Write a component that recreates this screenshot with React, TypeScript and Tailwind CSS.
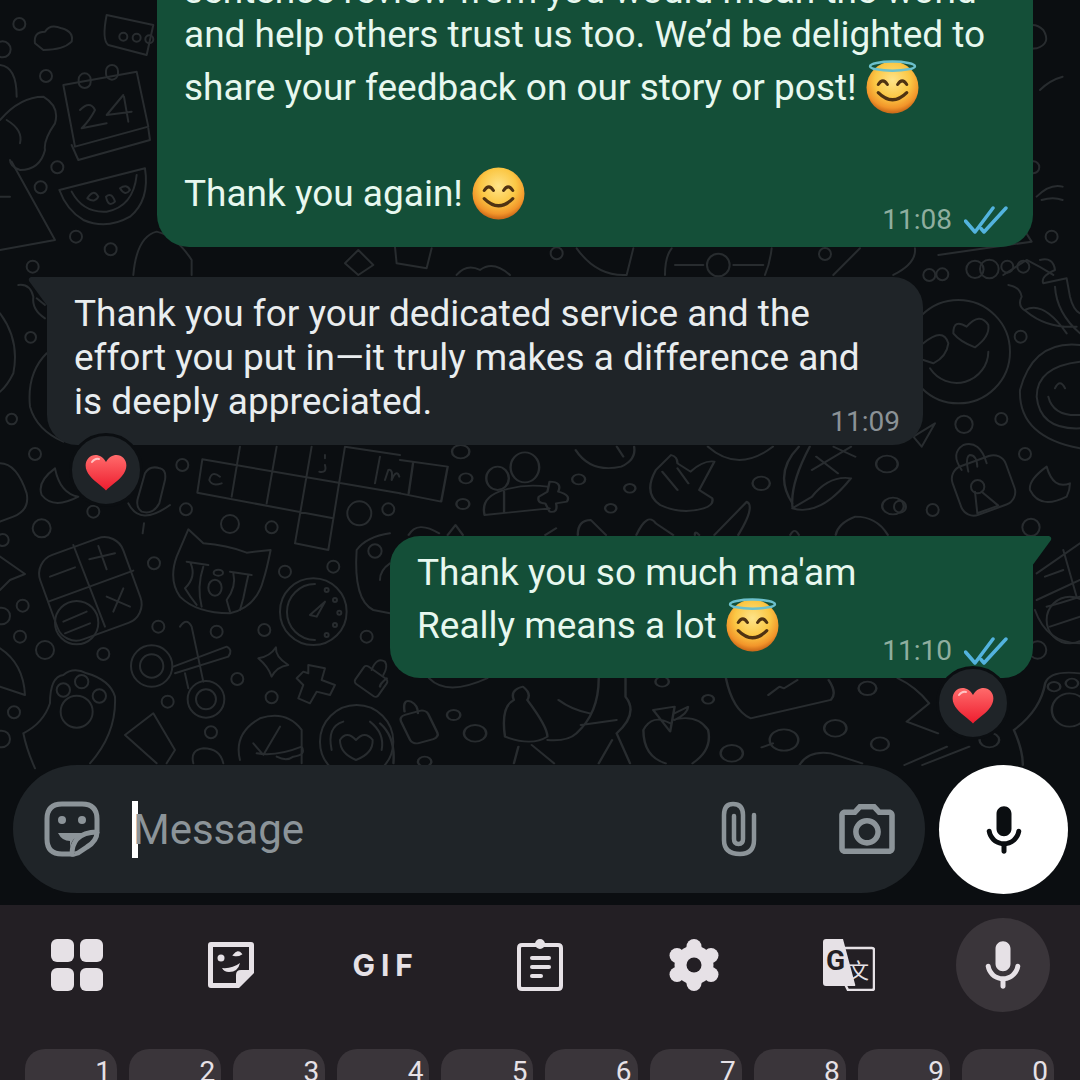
import React, { useId } from "react";

const font = { fontFamily: "Roboto, 'Noto Sans', sans-serif" };

type Ring = [number, number, number];

const Rings = ({ items }: { items: Ring[] }) => (
    <>
        {items.map(([x, y, r], i) => (
            <circle key={i} cx={x} cy={y} r={r} />
        ))}
    </>
);

// wallpaper doodles, traced in the coords of the zoomed crops
const Wallpaper = () => (
    <svg className="absolute inset-0" width="1080" height="1080" fill="none" stroke="#282c2f" strokeLinecap="round" strokeLinejoin="round">
        <g transform="scale(0.3333)" strokeWidth="6">
            <Rings items={[[58, 72, 18], [138, 228, 18], [172, 502, 18], [122, 562, 18], [228, 710, 18], [332, 748, 18], [98, 800, 18], [8, 148, 24], [370, 110, 12], [410, 113, 12], [448, 118, 12]]} />
            <path d="M105 130Q100 95 135 95Q150 70 185 85Q222 95 215 125Q190 150 130 150Z" />
            <path d="M320 45L460 75L440 165L325 135Q305 120 320 45Z" />
            <path d="M190 255L410 215L445 380L225 440Z" />
            <path d="M215 435L235 480L450 420L445 385" />
            <rect x="236" y="220" width="36" height="44" rx="18" />
            <rect x="318" y="195" width="36" height="44" rx="18" />
            <path d="M240 330Q270 300 285 330Q270 360 245 385L320 370M370 285L320 345L395 335M372 290L385 365" />
            <path d="M178 570L435 505Q450 600 390 650Q320 690 250 660Q200 630 178 570Z" />
            <path d="M215 575Q250 640 320 635Q400 620 410 525" />
            <path d="M262 595Q280 565 295 590Q285 610 262 595M318 590Q335 575 345 605Q325 625 318 590M360 565Q380 550 390 570Q375 590 360 565" />
            <path d="M0 195Q50 200 50 290M0 360Q60 290 130 290Q180 320 165 370Q130 420 135 450Q120 510 60 510Q30 500 30 480" />
            <path d="M35 485L165 720L0 750M0 590L30 590" />
            <path d="M20 360Q70 390 60 430" />
            <path d="M400 825Q410 710 470 695Q530 710 575 780L575 825" />
            <path d="M1035 790L1075 750L1120 795L1075 825Z" />
            <path d="M1185 740L1190 790L1280 805L1295 745" />
            <path d="M1370 825Q1400 790 1440 810Q1480 780 1530 825" />
        </g>
        <g transform="translate(540 0) scale(0.3333)" strokeWidth="6">
            <Rings items={[[50, 760, 18], [855, 762, 18], [535, 795, 34], [1168, 825, 18], [1305, 808, 26], [1402, 800, 18], [1480, 502, 18], [1535, 710, 18], [1445, 228, 14]]} />
            <path d="M110 745Q170 830 260 825L280 745M375 825Q375 770 395 745M695 745Q690 790 675 825M405 795L490 795M580 795L670 795" />
            <path d="M880 825L960 745M1125 745Q1130 790 1060 825" />
            <path d="M1440 670L1475 725L1195 765" />
            <path d="M1440 90Q1480 60 1510 90Q1535 130 1490 145L1440 150M1500 270Q1530 240 1568 230M1440 320Q1490 360 1470 400L1440 420" />
            <path d="M1490 590Q1530 550 1568 560M1505 600Q1540 590 1568 600M1390 825L1460 780Q1500 800 1540 825" />
        </g>
        <g transform="translate(0 260) scale(0.3333)" strokeWidth="6">
            <Rings items={[[92, 232, 16], [35, 477, 16]]} />
            <path d="M0 160Q60 240 40 340Q20 380 0 395M140 280Q80 340 90 440Q110 510 190 545" />
            <path d="M55 75Q90 70 100 110Q95 150 135 175M110 115L135 135" />
        </g>
        <g transform="translate(0 440) scale(0.3333)" strokeWidth="6">
            <Rings items={[[105, 42, 18], [547, 75, 18], [280, 215, 18], [558, 208, 18], [125, 265, 27], [690, 252, 27], [815, 262, 18], [1078, 220, 36], [1165, 208, 18], [462, 370, 18], [855, 395, 18], [1000, 380, 18], [68, 497, 18], [60, 590, 18], [475, 560, 18], [650, 575, 18], [793, 570, 18], [1100, 590, 18], [135, 630, 27], [310, 642, 18], [712, 717, 18], [503, 785, 18], [815, 772, 18], [42, 817, 18], [633, 877, 18], [8, 300, 18], [5, 528, 25], [5, 897, 25], [1125, 333, 20]]} />
            <path d="M607 58L1200 160M592 158L1000 235M1035 20L1200 45M720 20L695 170M830 20L800 190M935 20L885 310L985 330L1035 20M1140 50L1125 130M607 58L592 158" />
            <path d="M660 110Q635 90 628 120Q635 140 665 130M975 45L975 55M975 75Q982 100 958 95M1155 120L1165 90Q1180 85 1175 120Q1190 85 1198 110" />
            <path d="M565 268L610 310Q680 315 740 338L812 330Q800 390 790 420Q770 500 690 520Q590 520 540 470Q505 420 530 350Z" />
            <path d="M560 365L625 375M572 370Q590 410 555 445Q570 470 590 495M610 380Q590 440 605 500M690 395L755 405M700 400Q710 440 680 480L690 515M745 405Q735 450 730 475L720 510" />
            <ellipse cx="645" cy="443" rx="20" ry="24" />
            <ellipse cx="655" cy="398" rx="14" ry="9" />
            <rect x="138" y="312" width="265" height="270" rx="60" transform="rotate(-20 270 445)" />
            <path d="M220 315L315 560M145 485L400 392M150 410L225 382M268 358L345 340M295 318L320 388M320 470L390 500M370 445L340 515M190 545L260 515M195 580L270 550" />
            <circle cx="230" cy="548" r="65" />
            <circle cx="940" cy="515" r="100" />
            <path d="M945 432A83 83 0 0 0 945 600M930 525L975 485L950 530Z" />
            <Rings items={[[980, 450, 6], [1005, 480, 6], [1018, 518, 6], [1005, 555, 6], [980, 585, 6]]} />
            <circle cx="455" cy="678" r="62" />
            <circle cx="455" cy="678" r="35" />
            <path d="M520 680L680 620Q700 630 685 650L525 700M540 560Q560 530 575 560L610 725" />
            <path d="M555 700L565 745" />
            <circle cx="618" cy="778" r="55" />
            <circle cx="618" cy="778" r="30" />
            <path d="M828 622Q825 650 865 675Q830 680 815 710Q805 680 775 655Q810 650 828 622Z" />
            <path d="M925 675L975 685L965 720L1005 735L990 765L950 755L930 790L895 775L910 735L890 715L910 695L925 700Z" />
            <rect x="1072" y="690" width="84" height="64" rx="10" transform="rotate(35 1110 722)" />
            <path d="M1115 690Q1130 650 1155 665Q1165 680 1150 705" />
            <circle cx="230" cy="815" r="48" />
            <Rings items={[[190, 750, 20], [245, 725, 20], [298, 768, 20]]} />
            <path d="M70 880Q130 850 150 790Q150 710 190 705Q220 680 260 700Q330 720 345 770Q350 880 270 970M70 880Q80 930 105 985" />
            <path d="M375 885L460 820L525 930L500 970M375 885L470 970" />
            <path d="M720 960Q700 880 780 835Q860 810 905 870L905 970M760 910L790 945L840 860M770 940Q830 950 905 920Q920 945 880 950Q860 965 830 950" />
            <path d="M580 970Q570 930 610 925Q660 925 670 970" />
            <circle cx="1070" cy="905" r="110" />
            <path d="M995 930Q980 860 1030 845M1110 845Q1155 880 1145 930" />
            <path d="M1068 900Q1040 870 1020 900Q1020 940 1068 960Q1120 940 1118 900Q1095 870 1068 900Z" />
            <path d="M435 100Q450 75 480 85Q500 90 495 120L478 190Q460 225 425 215Q405 200 415 170ZM385 190Q420 260 510 195M432 250L428 280" />
            <path d="M165 85Q110 125 125 165Q160 210 235 170Q180 160 165 85Z" />
            <path d="M0 70Q50 70 80 160Q90 210 40 230L0 245M0 350L75 402L30 420L0 450M0 625Q70 670 75 765L0 740" />
            <path d="M1170 280Q1100 290 1070 330Q1060 480 1120 510L1170 520M1170 370Q1140 390 1140 420" />
        </g>
        {/* these two crops came back wider than tall, hence the two scales */}
        <g transform="translate(400 440) scale(0.4336 0.3333)" strokeWidth="5.500">
            <Rings items={[[152, 115, 15], [145, 192, 15], [412, 118, 15], [530, 145, 13], [486, 205, 13], [833, 130, 20], [1123, 72, 25], [1137, 198, 25], [140, 35, 20]]} />
            <ellipse cx="288" cy="82" rx="33" ry="45" />
            <ellipse cx="225" cy="115" rx="26" ry="35" />
            <path d="M195 225Q185 170 240 150Q290 130 340 140M240 155L240 218M195 225L345 205M345 125Q375 125 365 155Q395 165 385 185L360 190Q365 220 345 215L335 190Q315 190 320 170L340 155Z" />
            <path d="M405 30Q440 100 510 80Q545 60 540 20M500 20L515 50" />
            <path d="M590 90L625 45Q640 50 640 70L670 95Q700 60 725 65L690 150L720 175Q725 195 700 205Q650 225 600 195Q560 160 590 90ZM605 95L640 150M640 85L665 130" />
            <path d="M710 20Q780 100 860 20M905 190Q860 100 920 20M905 200Q900 130 945 20M905 205Q970 230 1040 115Q990 105 950 170L905 205M950 90L1040 20M960 50L1010 100M1000 20L1050 50" />
            <path d="M0 60L110 80L95 185L0 160M30 70L20 160M20 285Q40 240 90 280M110 285L128 255L145 285M335 285L360 265M410 285Q410 240 440 240L475 285M545 285Q570 215 590 250L630 285M725 285L800 185Q820 200 780 285M680 285Q680 270 690 285M900 285Q910 260 920 285M1005 285Q1010 250 1050 230Q1100 230 1125 285" />
        </g>
        <g transform="translate(380 670) scale(0.4464 0.3333)" strokeWidth="5.500">
            <Rings items={[[165, 135, 15], [213, 190, 25], [735, 88, 13], [788, 250, 25], [1020, 175, 25], [1120, 222, 20], [1092, 55, 20], [905, 210, 32], [632, 35, 15], [100, 275, 15], [1365, 210, 22], [1510, 50, 14], [1550, 40, 14]]} />
            <rect x="55" y="125" width="65" height="90" rx="15" transform="rotate(-20 90 170)" />
            <path d="M55 125Q50 85 70 95Q85 105 85 130M15 25Q0 40 0 50M0 160Q35 200 30 280" />
            <path d="M110 25Q150 80 240 25M280 200Q270 110 300 90Q290 60 320 50Q340 70 330 90Q375 170 375 200Q340 230 280 200ZM310 230L300 280M340 225L390 280M400 90Q430 120 470 130M490 25Q490 130 440 190Q420 215 375 210M550 25V80Q580 130 530 190L560 280M450 165L530 150M520 210L490 280" />
            <path d="M650 160Q610 130 590 180Q590 260 640 280M655 150Q710 130 735 180Q745 240 700 280M612 120L660 110L650 185ZM660 130L690 110Q690 130 660 150" />
            <path d="M775 25Q790 120 830 145L1010 90Q1025 70 1005 30M870 75L895 50L905 55L935 30" />
            <path d="M855 232L880 220M1180 155L1250 190M1180 155L1230 100Q1200 50 1160 25" />
            <path d="M940 285Q960 240 1010 250L1080 280M1175 285L1270 230M1215 285L1320 230" />
            <path d="M1420 180Q1480 120 1490 40Q1500 0 1568 10M1420 180Q1440 240 1440 285" />
            <ellipse cx="1545" cy="120" rx="40" ry="50" />
        </g>
        <g transform="translate(900 240) scale(0.3333)" strokeWidth="6">
            <Rings items={[[127, 103, 18], [268, 87, 28], [370, 80, 18], [362, 290, 18], [192, 553, 26], [304, 537, 18], [375, 642, 18], [98, 810, 18], [393, 862, 26], [0, 800, 18]]} />
            <circle cx="175" cy="335" r="155" />
            <path d="M90 385A95 95 0 0 0 265 335" />
            <path d="M160 280Q160 235 200 260Q240 215 265 255Q270 290 225 322Q180 305 160 280Z" />
            <path d="M70 310Q130 260 145 310Q140 350 100 370L70 360" />
            <path d="M325 135Q360 140 365 170Q350 200 380 215Q440 265 530 260M375 210Q430 180 500 280M420 60Q460 50 465 90Q420 110 430 130L500 115L510 170Q520 210 540 220M465 140Q470 220 540 280" />
            <path d="M540 315Q400 300 360 450Q355 590 540 625M540 365Q410 380 410 470Q420 570 540 565M445 470Q460 530 540 525M465 445Q480 415 495 445" />
            <rect x="165" y="660" width="170" height="155" rx="40" transform="rotate(-20 247 735)" />
            <path d="M185 690Q150 640 190 615Q240 600 260 670M205 695Q195 650 210 645Q230 645 232 680" />
            <circle cx="233" cy="740" r="20" />
            <path d="M225 755L232 820L295 797L245 755" />
            <path d="M440 680Q385 720 390 750Q420 810 500 770Q510 750 510 730Q460 750 440 680Z" />
            <path d="M40 590L105 550L65 620Z" />
        </g>
        <g transform="translate(700 530) scale(0.3333)" strokeWidth="6">
            <path d="M1010 130L1140 40M1010 210L1140 150M1005 240Q1040 340 1140 340M1090 60L1130 200M1035 140L1090 120M1040 230Q1080 220 1140 200M1050 290L1140 260" />
            <circle cx="1110" cy="270" r="70" />
            <circle cx="1013" cy="360" r="26" />
        </g>
    </svg>
);

const HaloIcon = () => (
    <g fill="none" stroke="#6cc0cc" strokeWidth="2.500">
        <ellipse cx="26" cy="7" rx="22" ry="4.500" />
    </g>
);

const Emoji = ({ halo }: { halo?: boolean }) => {
    const id = useId();
    return (
        <svg viewBox="0 0 52 54" className="inline-block w-[53px] h-[55px] align-[-14px] -mt-3">
            <defs>
                <radialGradient id={id} cx="50%" cy="36%" r="62%">
                    <stop offset="0%" stopColor="#fee48a" />
                    <stop offset="55%" stopColor="#fbc744" />
                    <stop offset="86%" stopColor="#f2952a" />
                    <stop offset="100%" stopColor="#cf6d1a" />
                </radialGradient>
            </defs>
            <circle cx="26" cy="28" r="25.500" fill={`url(#${id})`} />
            {halo && <HaloIcon />}
            <path d="M12 25Q16.500 18 21 25M31 25Q35.500 18 40 25" fill="none" stroke="#4f3212" strokeWidth="3" strokeLinecap="round" />
            <path d="M12 33Q26 47 40 33" fill="none" stroke="#4f3212" strokeWidth="3.200" strokeLinecap="round" />
        </svg>
    );
};

const Heart = () => {
    const id = useId();
    return (
        <svg viewBox="0 0 42 38" className="w-[42px] h-[38px]">
            <defs>
                <linearGradient id={id} x1="0" y1="0" x2="0" y2="1">
                    <stop offset="0%" stopColor="#ff6b6b" />
                    <stop offset="100%" stopColor="#ee1c2e" />
                </linearGradient>
            </defs>
            <path d="M21 9C17 1 8 0 3.500 5C-1 10 0 17 5 23C10 29 17 33 21 37.500C25 33 32 29 37 23C42 17 43 10 38.500 5C34 0 25 1 21 9Z" fill={`url(#${id})`} />
            <path d="M7 9Q10 5 14 6" fill="none" stroke="#ffc4c4" strokeWidth="2" strokeLinecap="round" />
        </svg>
    );
};

const Reaction = ({ className }: { className: string }) => (
    <div className={`absolute w-[74px] h-[74px] rounded-full bg-[#1f2428] border-[3px] border-[#0b0e11] flex items-center justify-center pt-1 ${className}`}>
        <Heart />
    </div>
);

const Ticks = () => (
    <svg viewBox="0 0 44 28" className="w-[44px] h-[28px]" fill="none" stroke="#53b3de" strokeWidth="3.500" strokeLinecap="round" strokeLinejoin="round">
        <path d="M1.500 15L11 26L29 2" />
        <path d="M20 26L42 2M17 22.500L20 26" />
    </svg>
);

const Time = ({ value, sent }: { value: string; sent?: boolean }) => (
    <div className={`absolute flex items-center gap-[12px] text-[28px] leading-none ${sent ? "right-[25px] bottom-[13px] text-[#8fae9f]" : "right-[23px] bottom-[9px] text-[#8b9296]"}`}>
        <span>{value}</span>
        {sent && <Ticks />}
    </div>
);

const StickerFace = () => (
    <svg viewBox="0 0 56 56" className="w-[56px] h-[56px]" fill="none" stroke="#8c9499" strokeWidth="5" strokeLinejoin="round">
        <path d="M18 3H38Q53 3 53 18V31Q40 31 33 38Q28 44 28 53H18Q3 53 3 38V18Q3 3 18 3Z" />
        <path d="M53 31Q53 40 43 46L34 52Q28 54 28 53" />
        <circle cx="18" cy="19" r="4" fill="#8c9499" stroke="none" />
        <circle cx="38" cy="19" r="4" fill="#8c9499" stroke="none" />
        <path d="M14 32H42Q36 36 30 38Q26 42 26 50V40Q18 40 14 32Z" fill="#8c9499" stroke="none" />
    </svg>
);

const Paperclip = () => (
    <svg viewBox="0 0 38 56" className="w-[38px] h-[56px]" fill="none" stroke="#8c9499" strokeWidth="4.500" strokeLinecap="round">
        <path d="M34 14V39Q34 53 20 53Q4 53 4 39V14Q4 3 13 3Q23 3 23 14V38Q23 43 18.500 43Q14 43 14 38V15" />
    </svg>
);

const Camera = () => (
    <svg viewBox="2 2 20 18" className="w-[56px] h-[50px]" fill="#8c9499">
        <path d="M14.120 4l1.830 2H20v12H4V6h4.050l1.830-2h4.240M15 2H9L7.170 4H4c-1.100 0-2 .9-2 2v12c0 1.100.9 2 2 2h16c1.100 0 2-.9 2-2V6c0-1.100-.9-2-2-2h-3.170L15 2zm-3 7c1.650 0 3 1.350 3 3s-1.350 3-3 3-3-1.350-3-3 1.350-3 3-3zm0-2c-2.760 0-5 2.240-5 5s2.240 5 5 5 5-2.240 5-5-2.240-5-5-5z" />
    </svg>
);

const Mic = ({ className, fill }: { className: string; fill: string }) => (
    <svg viewBox="4 1.500 16 20" className={className} fill={fill}>
        <path d="M12 14c1.660 0 3-1.340 3-3V5c0-1.660-1.340-3-3-3S9 3.340 9 5v6c0 1.660 1.340 3 3 3zm5.910-3c-.49 0-.9.360-.98.850C16.520 14.200 14.470 16 12 16s-4.520-1.800-4.930-4.150c-.08-.49-.49-.85-.98-.85-.61 0-1.090.54-1 1.140.49 3 2.890 5.350 5.910 5.780V20c0 .55.45 1 1 1s1-.45 1-1v-2.080c3.020-.43 5.420-2.780 5.910-5.780.1-.6-.39-1.140-1-1.140z" />
    </svg>
);

const Composer = () => (
    <div className="flex items-start gap-[14px] pl-[13px]">
        <div className="w-[912px] h-[128px] rounded-[64px] bg-[#1f2428] flex items-center pl-[31px] pr-[30px]">
            <StickerFace />
            <div className="ml-[32px] w-[6px] h-[57px] bg-white" />
            <span className="-ml-[5px] text-[42px] text-[#8c9499]">Message</span>
            <div className="ml-auto flex items-center gap-[81px]">
                <Paperclip />
                <Camera />
            </div>
        </div>
        <div className="w-[129px] h-[129px] rounded-full bg-white flex items-center justify-center">
            <Mic className="w-[40px] h-[62px]" fill="#0b0e11" />
        </div>
    </div>
);

const keyFill = "#e6e1e6";

const ToolGrid = () => (
    <div className="grid grid-cols-2 gap-[6px]">
        <div className="w-[23px] h-[23px] rounded-[6px] bg-[#e6e1e6]" />
        <div className="w-[23px] h-[23px] rounded-[6px] bg-[#e6e1e6]" />
        <div className="w-[23px] h-[23px] rounded-[6px] bg-[#e6e1e6]" />
        <div className="w-[23px] h-[23px] rounded-[6px] bg-[#e6e1e6]" />
    </div>
);

const ToolSticker = () => (
    <svg viewBox="0 0 46 46" className="w-[46px] h-[46px]">
        <path d="M3 0H43Q46 0 46 3V31L31 46H3Q0 46 0 43V3Q0 0 3 0ZM5 5V41H28V33Q28 28 33 28H41V5Z" fill={keyFill} fillRule="evenodd" />
        <path d="M33 41L41 33H33Z" fill={keyFill} />
        <circle cx="13" cy="16" r="3.500" fill={keyFill} />
        <path d="M26 13Q30 8 33 12Q30 14 26 13Z" fill={keyFill} stroke={keyFill} strokeWidth="2" />
        <path d="M14 26Q24 27 32 21Q30 30 21 30Q16 30 14 26Z" fill={keyFill} />
    </svg>
);

const ToolClipboard = () => (
    <svg viewBox="0 0 46 52" className="w-[46px] h-[52px]" fill="none" stroke={keyFill} strokeWidth="4">
        <path d="M15 6H31M15 6H5Q2 6 2 9V47Q2 50 5 50H41Q44 50 44 47V9Q44 6 41 6H31" />
        <circle cx="23" cy="5" r="3" />
        <rect x="13" y="17" width="21" height="4" rx="2" fill={keyFill} stroke="none" />
        <rect x="13" y="26" width="21" height="4" rx="2" fill={keyFill} stroke="none" />
        <rect x="13" y="35" width="13" height="4" rx="2" fill={keyFill} stroke="none" />
    </svg>
);

const ToolGear = () => (
    <svg viewBox="-25 -26 50 52" className="w-[50px] h-[52px]">
        <g fill={keyFill}>
            <circle r="19.500" />
            <circle cy="-18.500" r="7.500" />
            <circle cy="18.500" r="7.500" />
            <circle cx="17" cy="-9.500" r="7.500" />
            <circle cx="-17" cy="-9.500" r="7.500" />
            <circle cx="17" cy="9.500" r="7.500" />
            <circle cx="-17" cy="9.500" r="7.500" />
        </g>
        <circle r="7.500" fill="#231f24" />
    </svg>
);

const ToolTranslate = () => (
    <svg viewBox="0 0 52 52" className="w-[52px] h-[52px]">
        <path d="M20 9H49Q51 9 51 11V49Q51 51 49 51H25L22 45" fill="none" stroke={keyFill} strokeWidth="2.500" />
        <path d="M3 0H20L32 45Q33 47 31 47H3Q0 47 0 44V3Q0 0 3 0Z" fill={keyFill} />
        <text x="3" y="31" fontSize="28" fontWeight="700" fill="#231f24" fontFamily="Roboto, sans-serif">G</text>
        <text x="25" y="39" fontSize="21" fill={keyFill} fontFamily="'Noto Sans CJK SC', sans-serif">文</text>
    </svg>
);

const Keyboard = () => (
    <div className="bg-[#231f24] flex-1 h-full">
        <div className="grid grid-cols-7 h-[120px] items-center justify-items-center">
            <ToolGrid />
            <ToolSticker />
            <span className="text-[30px] font-bold tracking-[6px] text-[#e6e1e6]" style={{ fontFamily: "Inter, sans-serif" }}>GIF</span>
            <ToolClipboard />
            <ToolGear />
            <ToolTranslate />
            <div className="w-[94px] h-[94px] rounded-full bg-[#3a353a] flex items-center justify-center">
                <Mic className="w-[40px] h-[60px]" fill={keyFill} />
            </div>
        </div>
        <div className="grid grid-cols-10 gap-[12px] pl-[25px] pr-[26px] pt-[24px]">
            {["1", "2", "3", "4", "5", "6", "7", "8", "9", "0"].map((n) => (
                <div key={n} className="h-[60px] rounded-t-[20px] bg-[#3a353a] text-right pr-[6px] pt-[7px] text-[28px] leading-[32px] text-[#e6e1e6]">
                    {n}
                </div>
            ))}
        </div>
    </div>
);

export default function App() {
    return (
        <div className="relative w-[1080px] h-[1080px] overflow-hidden bg-[#0b0e11] flex flex-col" style={font}>
            <Wallpaper />
            <div className="relative flex-1 min-h-0 flex flex-col justify-end overflow-hidden pb-[87px]">
                <div className="relative shrink-0 ml-[157px] w-[876px] rounded-b-[32px] bg-[#144f38] pl-[27px] pb-[27px] text-[37px] leading-[53px] text-[#e7f8ef]">
                    <p className="-mb-[9px]">sentence review from you would mean the world</p>
                    <p>and help others trust us too. We’d be delighted to</p>
                    <p>share your feedback on our story or post! <Emoji halo /></p>
                    <p>&nbsp;</p>
                    <p>Thank you again! <Emoji /></p>
                    <Time value="11:08" sent />
                </div>

                <div className="relative shrink-0 mt-[30px] ml-[47px] w-[876px] rounded-[30px] rounded-tl-none bg-[#1f2428] pl-[27px] pt-[15px] pb-[21px] text-[37px] leading-[44px] text-[#e9edef]">
                    <svg viewBox="0 0 20 30" className="absolute -left-[19px] top-0 w-[20px] h-[30px]" fill="#1f2428">
                        <path d="M3 0H20V30L1 4Q0 1 3 0Z" />
                    </svg>
                    <p>Thank you for your dedicated service and the</p>
                    <p>effort you put in—it truly makes a difference and</p>
                    <p>is deeply appreciated.</p>
                    <Time value="11:09" />
                    <Reaction className="-bottom-[62px] left-[22px]" />
                </div>

                <div className="relative shrink-0 mt-[91px] ml-[390px] w-[643px] rounded-[30px] rounded-tr-none bg-[#144f38] pl-[27px] pt-[10px] pb-[26px] text-[37px] leading-[53px] text-[#e7f8ef]">
                    <svg viewBox="0 0 20 30" className="absolute -right-[19px] top-0 w-[20px] h-[30px]" fill="#144f38">
                        <path d="M17 0H0V30L19 4Q20 1 17 0Z" />
                    </svg>
                    <p>Thank you so much ma'am</p>
                    <p>Really means a lot <Emoji halo /></p>
                    <Time value="11:10" sent />
                    <Reaction className="-bottom-[62px] right-[23px]" />
                </div>
            </div>
            <div className="relative shrink-0 pb-[11px]">
                <Composer />
            </div>
            <div className="relative shrink-0 h-[175px]">
                <Keyboard />
            </div>
        </div>
    );
}
